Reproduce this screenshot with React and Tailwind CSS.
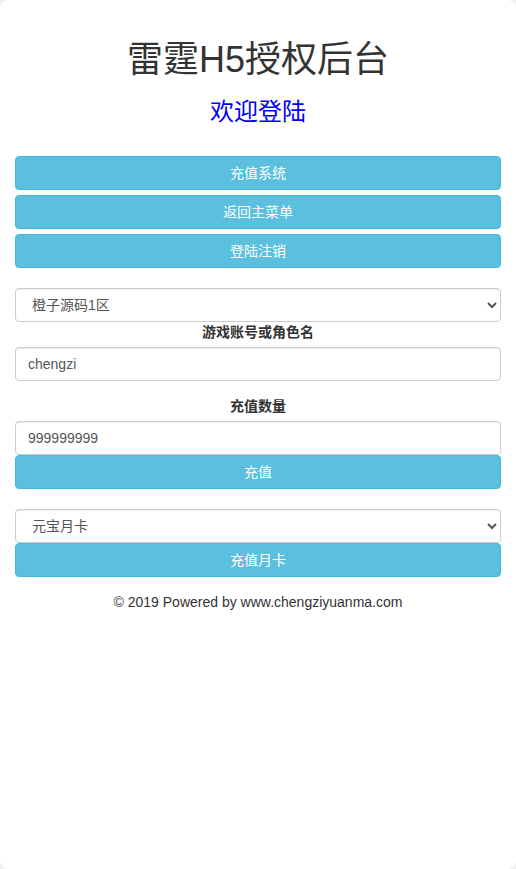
import { useState } from 'react';

const btn = 'block w-full h-[34px] rounded-[4px] border border-[#46b8da] bg-[#5bc0de] text-white text-[14px] leading-[20px] text-center';
const field = 'block w-full h-[34px] rounded-[4px] border border-[#ccc] bg-white px-[12px] text-[14px] text-[#555] shadow-[inset_0_1px_1px_rgba(0,0,0,0.075)] outline-none';

export default function App() {
  const [area, setArea] = useState('1');
  const [account, setAccount] = useState('chengzi');
  const [amount, setAmount] = useState('999999999');
  const [card, setCard] = useState('yb');

  return (
    <div className="min-h-[869px] bg-[#f0f0f0]" style={{ fontFamily: '"Liberation Sans", "Noto Sans CJK SC", sans-serif' }}>
      <div className="h-[869px] rounded-[9px] bg-white px-[15px] text-[#333]">
        <h1 className="pt-[40px] text-center text-[36px] leading-[40px]">雷霆H5授权后台</h1>
        <h3 className="mt-[19px] text-center text-[24px] leading-[26px] text-[#0000ff]">欢迎登陆</h3>

        <button className={btn + ' mt-[31px]'}>充值系统</button>
        <button className={btn + ' mt-[5px]'}>返回主菜单</button>
        <button className={btn + ' mt-[5px]'}>登陆注销</button>

        <select className={field + ' mt-[20px]'} value={area} onChange={e => setArea(e.target.value)}>
          <option value="1">橙子源码1区</option>
          <option value="2">橙子源码2区</option>
        </select>
        <label className="block text-center text-[14px] font-bold leading-[20px]">游戏账号或角色名</label>
        <input className={field + ' mt-[5px]'} value={account} onChange={e => setAccount(e.target.value)} />

        <label className="mt-[15px] block text-center text-[14px] font-bold leading-[20px]">充值数量</label>
        <input className={field + ' mt-[5px]'} value={amount} onChange={e => setAmount(e.target.value)} />
        <button className={btn}>充值</button>

        <select className={field + ' mt-[20px]'} value={card} onChange={e => setCard(e.target.value)}>
          <option value="yb">元宝月卡</option>
          <option value="zz">至尊月卡</option>
        </select>
        <button className={btn}>充值月卡</button>

        <p className="mt-[15px] text-center text-[14px] leading-[20px]">© 2019 Powered by www.chengziyuanma.com</p>
      </div>
    </div>
  );
}
